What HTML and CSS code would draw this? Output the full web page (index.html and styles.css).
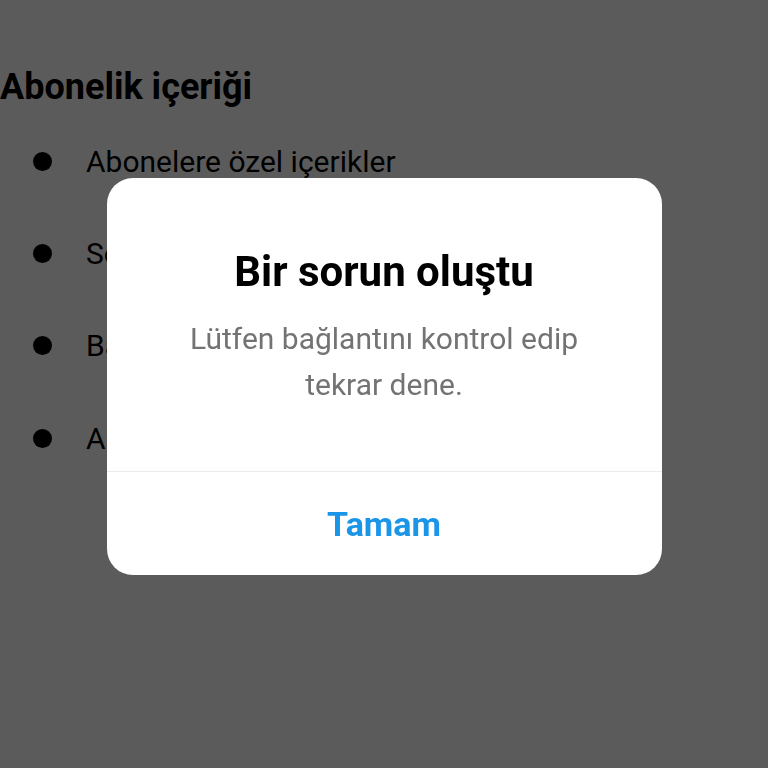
FILE: index.html
```html
<!DOCTYPE html>
<html lang="tr">
<head>
<meta charset="utf-8">
<title>Abonelik içeriği</title>
<link rel="stylesheet" href="styles.css">
</head>
<body>
<main class="page">
  <h2 class="heading">Abonelik içeriği</h2>
  <ul class="features">
    <li class="feature">Abonelere özel içerikler</li>
    <li class="feature">Sohbet kanalları</li>
    <li class="feature">Bağlantılar</li>
    <li class="feature">Abone rozeti</li>
  </ul>
</main>
<div class="overlay">
  <div class="dialog" role="dialog">
    <div class="dialog-body">
      <h1 class="dialog-title">Bir sorun oluştu</h1>
      <p class="dialog-text">Lütfen bağlantını kontrol edip<br>tekrar dene.</p>
    </div>
    <button class="dialog-button">Tamam</button>
  </div>
</div>
</body>
</html>
```
FILE: styles.css
```css
html, body {
  margin: 0;
  padding: 0;
}
body {
  background: #ffffff;
  color: #000000;
  font-family: Roboto, "Liberation Sans", sans-serif;
  width: 768px;
  height: 768px;
  overflow: hidden;
}
.page {
  padding-top: 66px;
}
.heading {
  margin: 0;
  font-size: 36px;
  line-height: 42px;
  font-weight: 700;
}
.features {
  list-style: none;
  margin: 7px 0 0;
  padding: 0;
}
.feature {
  display: flex;
  align-items: center;
  height: 92.4px;
  font-size: 30px;
}
.feature::before {
  content: "";
  width: 19px;
  height: 19px;
  border-radius: 50%;
  background: #000;
  margin-left: 33px;
  margin-right: 34px;
  flex: none;
}
.overlay {
  position: fixed;
  inset: 0;
  background: rgba(0, 0, 0, 0.645);
  display: flex;
  justify-content: center;
  align-items: flex-start;
  padding-top: 178px;
}
.dialog {
  width: 555px;
  height: 397px;
  background: #ffffff;
  border-radius: 26px;
  display: flex;
  flex-direction: column;
  overflow: hidden;
}
.dialog-body {
  height: 294px;
  border-bottom: 1px solid #ebebeb;
  text-align: center;
  padding-top: 69px;
  box-sizing: border-box;
}
.dialog-title {
  margin: 0;
  font-size: 42px;
  line-height: 50px;
  font-weight: 700;
  color: #000;
}
.dialog-text {
  margin: 19px 0 0;
  font-size: 30px;
  line-height: 46px;
  color: #737373;
}
.dialog-button {
  flex: 1;
  border: 0;
  background: transparent;
  font-family: inherit;
  font-size: 34px;
  font-weight: 700;
  color: #1a95e8;
  padding: 0;
}
```
